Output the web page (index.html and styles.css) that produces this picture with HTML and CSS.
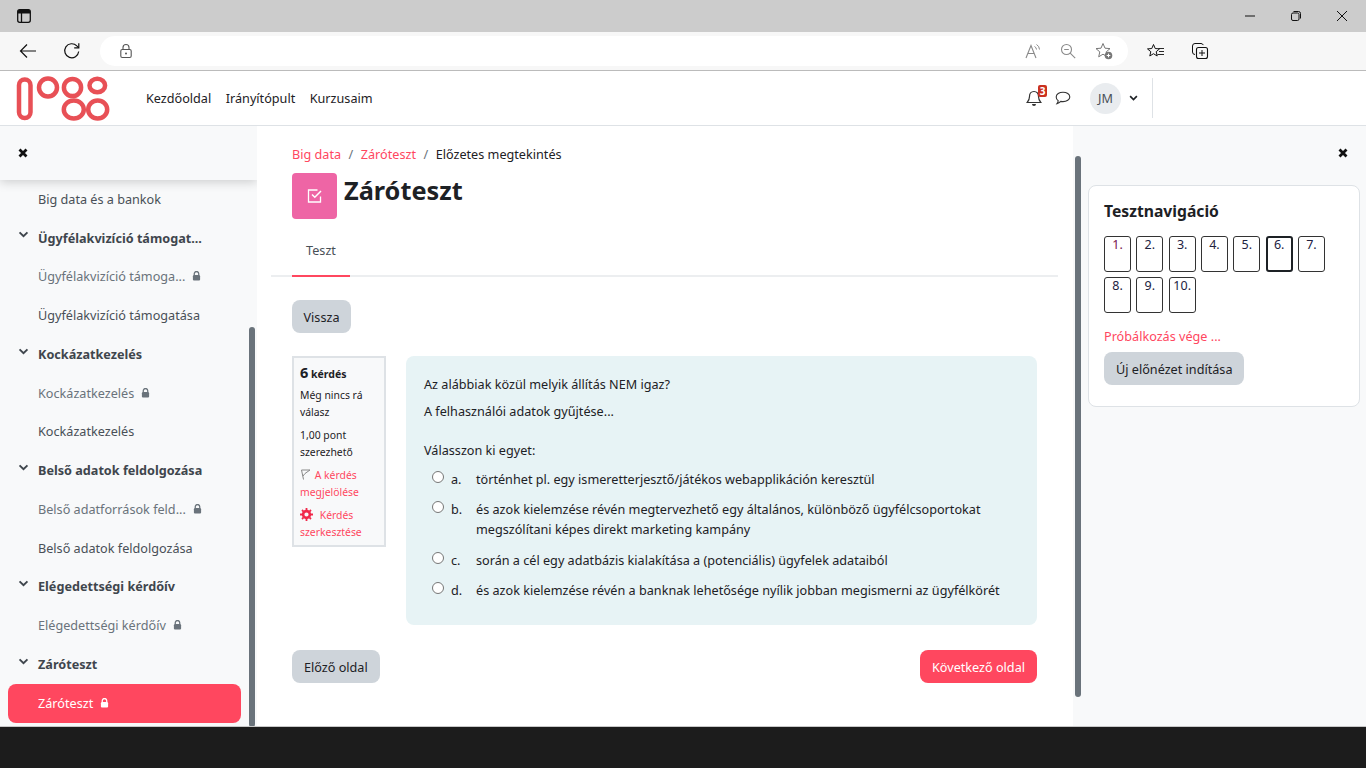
FILE: index.html
```html
<!DOCTYPE html>
<html lang="hu">
<head>
    <meta charset="UTF-8">
    <meta name="viewport" content="width=device-width, initial-scale=1.0">
    <title>Záróteszt</title>
    <link rel="stylesheet" href="styles.css">
</head>
<body>
    <svg class="icon-defs" width="0" height="0">
        <symbol id="lock" viewBox="0 0 10 11"><path d="M2.500 4.500V3a2.500 2.500 0 0 1 5 0v1.500" fill="none" stroke="currentColor" stroke-width="1.400"/><rect x="1" y="4.500" width="8" height="6" rx="1.200" fill="currentColor"/></symbol>
        <symbol id="chevron" viewBox="0 0 12 8"><path d="M1.500 1.500 6 6l4.500-4.500" fill="none" stroke="currentColor" stroke-width="2.200"/></symbol>
        <symbol id="close" viewBox="0 0 10 10"><path d="M1.500 1.500l7 7M8.500 1.500l-7 7" fill="none" stroke="currentColor" stroke-width="2.800"/></symbol>
    </svg>

    <div class="titlebar">
        <svg class="tab-icon" width="16" height="16" viewBox="0 0 16 16"><rect x="1.700" y="1.700" width="12.600" height="12.600" rx="2" fill="none" stroke="#111" stroke-width="1.300"/><path d="M1.700 3.700a2 2 0 0 1 2-2h8.600a2 2 0 0 1 2 2v1.800H1.700z" fill="#111"/><path d="M5.500 5v9" stroke="#111" stroke-width="1.300"/></svg>
        <div class="window-buttons">
            <svg width="12" height="12" viewBox="0 0 12 12"><path d="M1 6h10" stroke="#111"/></svg>
            <svg width="12" height="12" viewBox="0 0 12 12"><rect x="1.500" y="3" width="7.500" height="7.500" rx="1.500" fill="none" stroke="#111"/><path d="M3.500 1.500h5a2 2 0 0 1 2 2v5" fill="none" stroke="#111"/></svg>
            <svg width="12" height="12" viewBox="0 0 12 12"><path d="M1 1l10 10M11 1 1 11" stroke="#111"/></svg>
        </div>
    </div>

    <div class="toolbar">
        <svg class="tool-back" width="18" height="16" viewBox="0 0 18 16"><path d="M1.500 8h15.500M8 1.500 1.500 8 8 14.500" fill="none" stroke="#111" stroke-width="1.200"/></svg>
        <svg class="tool-reload" width="18" height="18" viewBox="0 0 18 18"><path d="M15.700 9.500A7 7 0 1 1 13.800 3.900L15.600 5.600" fill="none" stroke="#111" stroke-width="1.200"/><path d="M15.800 1.200v4.600h-4.600" fill="none" stroke="#111" stroke-width="1.200"/></svg>
        <div class="address-bar">
            <svg width="14" height="16" viewBox="0 0 14 16"><path d="M4 6.500V4.500a3 3 0 0 1 6 0v2" fill="none" stroke="#555" stroke-width="1.100"/><rect x="1.800" y="6.500" width="10.400" height="8" rx="1.500" fill="none" stroke="#555" stroke-width="1.100"/><circle cx="7" cy="10.500" r="1" fill="#555"/></svg>
            <div class="address-icons">
                <svg width="18" height="16" viewBox="0 0 18 16"><path d="M3 15 8 2.500 13 15M4.800 10.500h6.400" fill="none" stroke="#8a8a8a" stroke-width="1.100"/><path d="M11.500 3.500a3.500 3.500 0 0 1 2 3M13.500 1.500a6 6 0 0 1 3 5" fill="none" stroke="#8a8a8a"/></svg>
                <svg width="16" height="16" viewBox="0 0 16 16"><circle cx="6.500" cy="6.500" r="5" fill="none" stroke="#8a8a8a" stroke-width="1.100"/><path d="M4.200 6.500h4.600M10.200 10.200l5 5" fill="none" stroke="#8a8a8a" stroke-width="1.100"/></svg>
                <svg width="18" height="18" viewBox="0 0 18 18"><path d="M8 1.500l2 4.700 5 .4-3.800 3.300 1.100 4.900L8 12.200l-4.300 2.600 1.100-4.900L1 6.600l5-.4z" fill="none" stroke="#777" stroke-width="1"/><circle cx="13.500" cy="13.500" r="3.800" fill="#777"/><path d="M11.700 13.500h3.600M13.500 11.700v3.600" stroke="#fff"/></svg>
            </div>
        </div>
        <div class="toolbar-icons">
            <svg width="18" height="17" viewBox="0 0 18 17"><path d="M6.500 1.500l1.700 4 4.300.4-3.300 2.800 1 4.300-3.700-2.300-3.700 2.300 1-4.300L.5 5.900l4.300-.4z" fill="none" stroke="#111" stroke-width="1"/><path d="M11.500 5.500H17M12 8.500h5M10.500 11.500H17" stroke="#111" stroke-width=".9"/></svg>
            <svg width="18" height="18" viewBox="0 0 18 18"><path d="M4 12.500A2.500 2.500 0 0 1 1.500 10V4A2.500 2.500 0 0 1 4 1.500h6a2.500 2.500 0 0 1 2.300 1.600" fill="none" stroke="#111"/><rect x="5.500" y="5.500" width="11" height="11" rx="2" fill="none" stroke="#111" stroke-width="1.100"/><path d="M11 8v6M8 11h6" stroke="#111"/></svg>
        </div>
    </div>

    <nav class="topnav">
        <svg class="logo" width="96" height="46" viewBox="0 0 96 46">
            <g fill="none" stroke="#e85056" stroke-width="4.500">
                <rect x="3" y="4.500" width="11.500" height="38.500" rx="5.700"/>
                <circle cx="32" cy="12.500" r="9"/>
                <circle cx="56.500" cy="12.500" r="8.600"/>
                <ellipse cx="81.300" cy="10.500" rx="7.800" ry="6.800"/>
                <ellipse cx="57.800" cy="34.500" rx="10" ry="9"/>
                <ellipse cx="81.700" cy="34.500" rx="9.500" ry="9"/>
            </g>
        </svg>
        <a class="topnav-link">Kezdőoldal</a>
        <a class="topnav-link">Irányítópult</a>
        <a class="topnav-link">Kurzusaim</a>
        <div class="usernav">
            <div class="bell">
                <svg width="16" height="17" viewBox="0 0 16 17"><path d="M8 1.500c-3 0-4.500 2.200-4.500 5 0 3-1 4.500-2.300 6h13.600c-1.300-1.500-2.300-3-2.300-6 0-2.800-1.500-5-4.500-5z" fill="none" stroke="#333" stroke-width="1.200"/><path d="M6 14a2 2 0 0 0 4 0z" fill="#333"/></svg>
                <span class="bell-badge">3</span>
            </div>
            <svg class="chat-icon" width="16" height="14" viewBox="0 0 16 14"><path d="M8 1.200c3.700 0 6.800 2 6.800 4.700S11.700 10.600 8 10.600c-.8 0-1.500-.1-2.200-.2-.9.900-2.200 1.900-3.800 2.200.7-.9 1.100-1.900 1.200-2.900C1.900 8.800 1.200 7.400 1.200 5.900 1.200 3.200 4.300 1.200 8 1.200z" fill="none" stroke="#333" stroke-width="1.100"/></svg>
            <span class="avatar">JM</span>
            <svg class="user-chevron" width="9" height="6" viewBox="0 0 12 8"><use href="#chevron"/></svg>
            <span class="usernav-divider"></span>
        </div>
    </nav>

    <div class="page">
        <aside class="course-index">
            <div class="drawer-head"><svg width="10" height="10"><use href="#close"/></svg></div>
            <ul class="index-list">
                <li class="index-item">Big data és a bankok</li>
                <li class="index-item section"><svg width="11" height="7"><use href="#chevron"/></svg>Ügyfélakvizíció támogat...</li>
                <li class="index-item muted">Ügyfélakvizíció támoga... <svg class="lock" width="9" height="10"><use href="#lock"/></svg></li>
                <li class="index-item">Ügyfélakvizíció támogatása</li>
                <li class="index-item section"><svg width="11" height="7"><use href="#chevron"/></svg>Kockázatkezelés</li>
                <li class="index-item muted">Kockázatkezelés <svg class="lock" width="9" height="10"><use href="#lock"/></svg></li>
                <li class="index-item">Kockázatkezelés</li>
                <li class="index-item section"><svg width="11" height="7"><use href="#chevron"/></svg>Belső adatok feldolgozása</li>
                <li class="index-item muted">Belső adatforrások feld... <svg class="lock" width="9" height="10"><use href="#lock"/></svg></li>
                <li class="index-item">Belső adatok feldolgozása</li>
                <li class="index-item section"><svg width="11" height="7"><use href="#chevron"/></svg>Elégedettségi kérdőív</li>
                <li class="index-item muted">Elégedettségi kérdőív <svg class="lock" width="9" height="10"><use href="#lock"/></svg></li>
                <li class="index-item section"><svg width="11" height="7"><use href="#chevron"/></svg>Záróteszt</li>
                <li class="index-item active">Záróteszt <svg class="lock" width="9" height="10"><use href="#lock"/></svg></li>
            </ul>
            <span class="scroll-thumb index-thumb"></span>
        </aside>

        <main class="content">
            <div class="breadcrumb">
                <a>Big data</a><span class="sep">/</span><a>Záróteszt</a><span class="sep">/</span><span>Előzetes megtekintés</span>
            </div>
            <div class="page-header">
                <span class="activity-icon">
                    <svg width="18" height="18" viewBox="0 0 18 18"><path d="M14.500 9.500v5.500h-12V3h9" fill="none" stroke="#fff" stroke-width="1.300"/><path d="M6 7.500 8.800 10.300 15 4" fill="none" stroke="#fff" stroke-width="1.500"/></svg>
                </span>
                <h1>Záróteszt</h1>
            </div>
            <div class="tabs"><a class="tab">Teszt</a></div>
            <div class="content-body">
                <button class="btn btn-grey back-btn">Vissza</button>
                <div class="question">
                    <div class="question-info">
                        <h3><span class="qno">6</span> kérdés</h3>
                        <p>Még nincs rá válasz</p>
                        <p>1,00 pont szerezhető</p>
                        <p><svg class="flag" width="11" height="11" viewBox="0 0 11 11"><path d="M1.500 1 3.500 10.500M1.500 1h8.500L5 4.500 3 7" fill="none" stroke="#888"/></svg> <a>A kérdés megjelölése</a></p>
                        <p><svg class="gear" width="13" height="13" viewBox="0 0 13 13"><circle cx="6.500" cy="6.500" r="3.400" fill="none" stroke="#f0294a" stroke-width="2.600"/><path d="M6.500 0v13M0 6.500h13M2 2l9 9M11 2l-9 9" stroke="#f0294a" stroke-width="1.800" stroke-dasharray="2.200 8.600 2.200"/></svg> <a class="gear-link">Kérdés szerkesztése</a></p>
                    </div>
                    <div class="question-body">
                        <p class="q-line">Az alábbiak közül melyik állítás NEM igaz?</p>
                        <p class="q-line">A felhasználói adatok gyűjtése...</p>
                        <p class="q-prompt">Válasszon ki egyet:</p>
                        <div class="answer"><span class="radio"></span><span class="answer-no">a.</span><span>történhet pl. egy ismeretterjesztő/játékos webapplikáción keresztül</span></div>
                        <div class="answer"><span class="radio"></span><span class="answer-no">b.</span><span>és azok kielemzése révén megtervezhető egy általános, különböző ügyfélcsoportokat megszólítani képes direkt marketing kampány</span></div>
                        <div class="answer"><span class="radio"></span><span class="answer-no">c.</span><span>során a cél egy adatbázis kialakítása a (potenciális) ügyfelek adataiból</span></div>
                        <div class="answer"><span class="radio"></span><span class="answer-no">d.</span><span>és azok kielemzése révén a banknak lehetősége nyílik jobban megismerni az ügyfélkörét</span></div>
                    </div>
                </div>
                <div class="page-buttons">
                    <button class="btn btn-grey">Előző oldal</button>
                    <button class="btn btn-primary">Következő oldal</button>
                </div>
            </div>
        </main>

        <aside class="quiz-drawer">
            <span class="scroll-thumb drawer-thumb"></span>
            <div class="drawer-close"><svg width="10" height="10"><use href="#close"/></svg></div>
            <div class="nav-card">
                <h2>Tesztnavigáció</h2>
                <div class="qn-grid">
                    <a class="qn visited">1.</a><a class="qn">2.</a><a class="qn">3.</a><a class="qn">4.</a><a class="qn">5.</a><a class="qn current">6.</a><a class="qn">7.</a>
                    <a class="qn">8.</a><a class="qn">9.</a><a class="qn">10.</a>
                </div>
                <a class="finish-link">Próbálkozás vége ...</a>
                <button class="btn btn-grey">Új előnézet indítása</button>
            </div>
        </aside>
    </div>
    <div class="taskbar"></div>
</body>
</html>
```

FILE: styles.css
```css
* {
    margin: 0;
    padding: 0;
    box-sizing: border-box;
}

html, body {
    height: 768px;
    overflow: hidden;
}

body {
    display: flex;
    flex-direction: column;
    font-family: "Noto Sans", "Open Sans", sans-serif;
    font-size: 12.65px;
    color: #1d2125;
    background-color: #fff;
}

.icon-defs {
    position: absolute;
}

/* browser frame */
.titlebar {
    height: 32px;
    flex: none;
    display: flex;
    align-items: center;
    justify-content: space-between;
    background-color: #cccccc;
    padding: 0 18px 0 16px;
}

.window-buttons {
    display: flex;
    gap: 34px;
}

.toolbar {
    height: 39px;
    flex: none;
    display: flex;
    align-items: center;
    background-color: #f7f7f7;
    border-bottom: 1px solid #bbbbbb;
    padding-left: 19px;
}

.tool-reload {
    margin-left: 26px;
}

.address-bar {
    width: 1028px;
    height: 30px;
    margin-left: 19px;
    padding: 0 15px 0 19px;
    display: flex;
    align-items: center;
    justify-content: space-between;
    background-color: #fff;
    border-radius: 15px;
}

.address-icons {
    display: flex;
    align-items: center;
    gap: 19px;
}

.toolbar-icons {
    display: flex;
    align-items: center;
    gap: 26px;
    margin-left: 19px;
}

/* site navbar */
.topnav {
    height: 55px;
    flex: none;
    display: flex;
    align-items: center;
    background-color: #fff;
    border-bottom: 1px solid #dee2e6;
    padding-left: 16px;
}

.logo {
    margin-right: 34px;
}

.topnav-link {
    margin-right: 14.5px;
    color: #1d2125;
}

.usernav {
    margin-left: auto;
    margin-right: 213px;
    display: flex;
    align-items: center;
}

.bell {
    position: relative;
    display: flex;
    margin-right: 13px;
}

.bell-badge {
    position: absolute;
    top: -5px;
    left: 12px;
    width: 9px;
    height: 12px;
    background-color: #ca3120;
    border-radius: 2px;
    color: #fff;
    font-size: 10px;
    font-weight: 700;
    line-height: 12px;
    text-align: center;
}

.avatar {
    width: 31px;
    height: 31px;
    margin-left: 19px;
    border-radius: 50%;
    background-color: #e9ecef;
    font-size: 12.65px;
    line-height: 31px;
    text-align: center;
    color: #495057;
}

.user-chevron {
    margin-left: 8px;
    color: #1d2125;
}

.usernav-divider {
    width: 1px;
    height: 40px;
    margin-left: 14px;
    background-color: #dee2e6;
}

/* three columns */
.page {
    height: 601px;
    flex: none;
    display: flex;
    border-bottom: 1px solid #c8c8c8;
}

.course-index {
    position: relative;
    width: 257px;
    flex: none;
    background-color: #f8f9fa;
    overflow: hidden;
}

.drawer-head {
    height: 54px;
    padding: 18px 0 0 18px;
    background-color: #f8f9fa;
    box-shadow: 0 2px 10px rgba(0,0,0,0.18);
    color: #111;
    position: relative;
    width: 257px;
}

.index-list {
    list-style: none;
    margin-top: -0.4px;
}

.index-item {
    height: 38.75px;
    display: flex;
    align-items: center;
    gap: 5px;
    padding-left: 38px;
    color: #495057;
}

.index-item.muted {
    color: #6a737b;
}

.index-item.section {
    position: relative;
    font-weight: 700;
    color: #3f464d;
}

.index-item.section svg {
    position: absolute;
    left: 18px;
    top: 13px;
}

.index-item.active {
    width: 233px;
    margin-top: 0.4px;
    margin-left: 8px;
    padding-left: 30px;
    background-color: #ff475f;
    border-radius: 8px;
    color: #fff;
}

.lock {
    margin-left: 2px;
}

.scroll-thumb {
    position: absolute;
    width: 6px;
    background-color: #6a737b;
    border-radius: 3px;
}

.index-thumb {
    left: 249px;
    top: 201px;
    height: 400px;
}

/* main column */
.content {
    width: 816px;
    flex: none;
    padding-top: 20px;
    background-color: #fff;
}

.breadcrumb {
    padding-left: 35px;
    height: 17px;
    line-height: 17px;
    display: flex;
}

.breadcrumb a, .finish-link, .question-info a {
    color: #ff475f;
}

.sep {
    margin: 0 7.5px;
    color: #6a737b;
}

.page-header {
    display: flex;
    margin-top: 10px;
    padding-left: 35px;
}

.activity-icon {
    width: 45px;
    height: 46px;
    display: flex;
    align-items: center;
    justify-content: center;
    background-color: #ee65a5;
    border-radius: 4px;
}

.page-header h1 {
    margin: 0 0 0 7px;
    font-size: 25.3px;
    font-weight: 700;
    line-height: 35px;
    color: #1d2125;
}

.tabs {
    height: 58px;
    margin: 0 15px 0 14px;
    padding-left: 21px;
    border-bottom: 2px solid #eceef0;
    display: flex;
    align-items: flex-end;
}

.tab {
    width: 58px;
    height: 49px;
    margin-bottom: -2px;
    border-bottom: 2px solid #ff475f;
    line-height: 45px;
    text-align: center;
    color: #495057;
}

.content-body {
    padding: 23px 36px 0 35px;
}

.btn {
    height: 33px;
    padding: 0 12px;
    border: none;
    border-radius: 8px;
    font-family: inherit;
    font-size: 12.65px;
    color: #1d2125;
}

.btn-grey {
    background-color: #ced4da;
}

.btn-primary {
    background-color: #ff475f;
    color: #fff;
}

.back-btn {
    padding: 1px 11.5px 0;
}

.question {
    display: flex;
    gap: 20px;
    margin-top: 23px;
}

.question-info {
    width: 94px;
    height: 191px;
    flex: none;
    padding: 4px 5px 0 6px;
    background-color: #f8f9fa;
    border: 2px solid #dee2e6;
    font-size: 10.4px;
    line-height: 16.5px;
}

.question-info h3 {
    font-size: 10.5px;
    font-weight: 700;
    line-height: 21px;
}

.qno {
    font-size: 14.5px;
}

.question-info p {
    margin-top: 7px;
}

.question-info h3 + p {
    margin-top: 2px;
}

.flag {
    vertical-align: -1px;
    margin-right: 1px;
}

.gear {
    vertical-align: -2px;
    margin-right: 4px;
}

.question-body {
    flex: 1;
    height: 269px;
    padding: 18px 18px 0;
    background-color: #e7f3f5;
    border-radius: 8px;
    line-height: 20px;
}

.q-line {
    margin-bottom: 7px;
}

.q-prompt {
    margin-top: 19px;
    margin-bottom: 9px;
}

.answer {
    display: flex;
    margin-bottom: 10.3px;
    padding-left: 8px;
}

.radio {
    width: 12px;
    height: 12px;
    flex: none;
    margin-top: 2px;
    border: 1px solid #767676;
    border-radius: 50%;
    background-color: #fff;
}

.answer-no {
    width: 25px;
    flex: none;
    margin-left: 7px;
}

.page-buttons {
    display: flex;
    justify-content: space-between;
    margin-top: 25px;
}

/* right drawer */
.quiz-drawer {
    position: relative;
    flex: 1;
    padding: 59px 6px 0 15px;
    background-color: #f8f9fa;
}

.drawer-thumb {
    left: 2px;
    top: 30px;
    height: 541px;
}

.drawer-close {
    position: absolute;
    top: 18px;
    left: 265px;
    color: #111;
}

.nav-card {
    height: 222px;
    padding: 16px 15px 0;
    background-color: #fff;
    border: 1px solid #dee2e6;
    border-radius: 8px;
}

.nav-card h2 {
    font-size: 15.7px;
    font-weight: 700;
    line-height: 18px;
}

.qn-grid {
    display: grid;
    grid-template-columns: repeat(7, 27px);
    grid-auto-rows: 36px;
    column-gap: 5.33px;
    row-gap: 5px;
    margin-top: 16px;
}

.qn {
    border: 1px solid #333;
    border-radius: 3px;
    font-size: 12.5px;
    line-height: 16px;
    text-align: center;
    color: #22223f;
}

.qn.visited {
    color: #7a1450;
}

.qn.current {
    border: 2px solid #1d2125;
    line-height: 14px;
}

.finish-link {
    display: block;
    margin-top: 14px;
    line-height: 18px;
}

.nav-card .btn {
    margin-top: 7px;
}

.taskbar {
    flex: 1;
    background-color: #1c1c1c;
}
```
